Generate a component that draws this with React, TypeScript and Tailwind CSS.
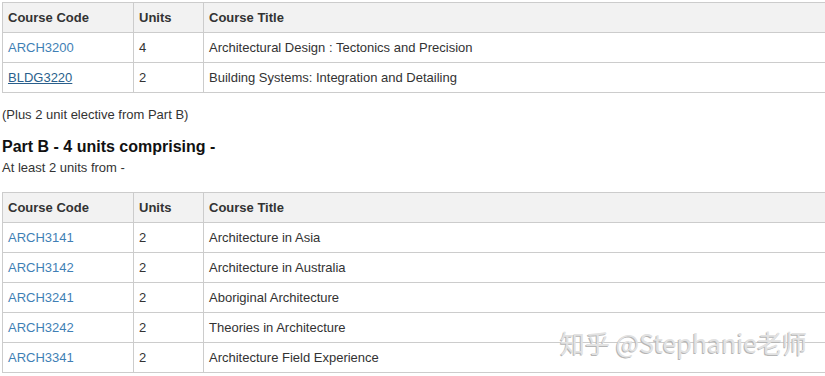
import React from "react";

const t1 = [
  { code: "ARCH3200", units: "4", title: "Architectural Design : Tectonics and Precision", hover: false },
  { code: "BLDG3220", units: "2", title: "Building Systems: Integration and Detailing", hover: true },
];
const t2 = [
  { code: "ARCH3141", units: "2", title: "Architecture in Asia" },
  { code: "ARCH3142", units: "2", title: "Architecture in Australia" },
  { code: "ARCH3241", units: "2", title: "Aboriginal Architecture" },
  { code: "ARCH3242", units: "2", title: "Theories in Architecture" },
  { code: "ARCH3341", units: "2", title: "Architecture Field Experience" },
];

function Table({ rows }: { rows: { code: string; units: string; title: string; hover?: boolean }[] }) {
  return (
    <table className="border-collapse w-[840px] table-fixed">
      <colgroup>
        <col className="w-[131px]" />
        <col className="w-[70px]" />
        <col />
      </colgroup>
      <thead>
        <tr className="h-[30px] bg-[#f2f2f2]">
          <th className="border border-[#cccccc] text-left font-bold px-[5px] py-0 text-[#333]">Course Code</th>
          <th className="border border-[#cccccc] text-left font-bold px-[5px] py-0 text-[#333]">Units</th>
          <th className="border border-[#cccccc] text-left font-bold px-[5px] py-0 text-[#333]">Course Title</th>
        </tr>
      </thead>
      <tbody>
        {rows.map((r) => (
          <tr key={r.code} className="h-[30px]">
            <td className="border border-[#cccccc] px-[5px] py-0">
              <a className={r.hover ? "text-[#2a5f8c] underline" : "text-[#3f7fb5]"}>{r.code}</a>
            </td>
            <td className="border border-[#cccccc] px-[5px] py-0">{r.units}</td>
            <td className="border border-[#cccccc] px-[5px] py-0">{r.title}</td>
          </tr>
        ))}
      </tbody>
    </table>
  );
}

export default function App() {
  return (
    <div className="relative w-[825px] h-[376px] overflow-hidden bg-white font-['Liberation_Sans',Arial,sans-serif] text-[13px] leading-[18px] text-[#333]">
      <div className="pt-[2px] pl-[2px]">
        <Table rows={t1} />
        <p className="mt-[13px]">(Plus 2 unit elective from Part B)</p>
        <h3 className="mt-[13px] text-[16px] leading-[20px] font-bold text-[#111]">Part B - 4 units comprising -</h3>
        <p className="mt-[2px]">At least 2 units from -</p>
        <div className="mt-[15px]">
          <Table rows={t2} />
        </div>
      </div>
      <div className="absolute left-[560px] top-[327px] text-[25px] leading-[30px] text-[#e2e2e2] font-['Noto_Sans_CJK_SC',sans-serif] [text-shadow:-1px_1px_0_#b5b5b5] whitespace-nowrap">
        知乎 @Stephanie老师
      </div>
    </div>
  );
}
